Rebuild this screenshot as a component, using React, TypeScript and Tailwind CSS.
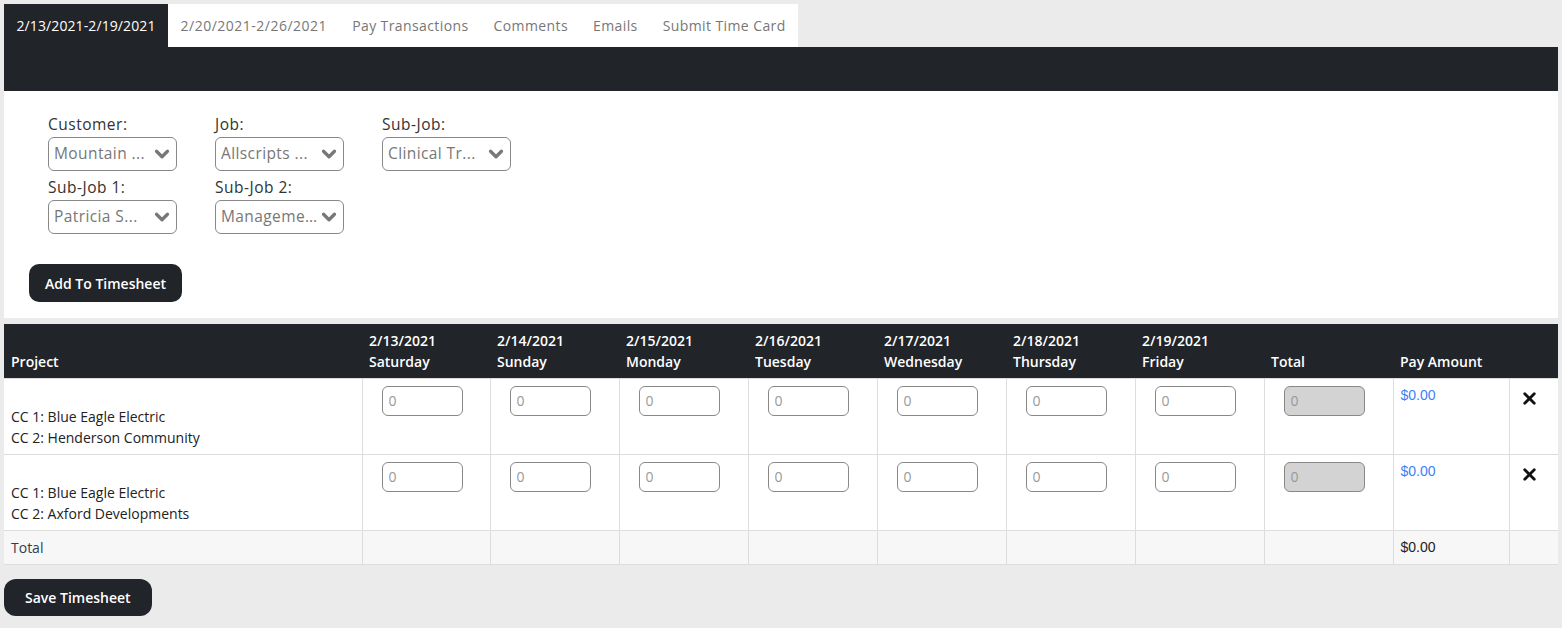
import { ChevronDown, X } from 'lucide-react';

const tabs = [
  { label: '2/13/2021-2/19/2021', track: 'tracking-[0.1px]' },
  { label: '2/20/2021-2/26/2021', track: 'tracking-[0.5px]' },
  { label: 'Pay Transactions', track: 'tracking-[0.4px]' },
  { label: 'Comments', track: 'tracking-[0.4px]' },
  { label: 'Emails', track: 'tracking-[0.4px]' },
  { label: 'Submit Time Card', track: 'tracking-[0.4px]' },
];

const days = [
  { date: '2/13/2021', name: 'Saturday' },
  { date: '2/14/2021', name: 'Sunday' },
  { date: '2/15/2021', name: 'Monday' },
  { date: '2/16/2021', name: 'Tuesday' },
  { date: '2/17/2021', name: 'Wednesday' },
  { date: '2/18/2021', name: 'Thursday' },
  { date: '2/19/2021', name: 'Friday' },
];

const rows = [
  { cc1: 'Blue Eagle Electric', cc2: 'Henderson Community' },
  { cc1: 'Blue Eagle Electric', cc2: 'Axford Developments' },
];

const font = { fontFamily: '"Open Sans", "Liberation Sans", sans-serif' };
const arial = { fontFamily: '"Liberation Sans", Arial, sans-serif' };

function Select({ label, value }: { label: string; value: string }) {
  return (
    <div className="w-[129px]">
      <div className="text-[15.5px] leading-[22px] tracking-[0.5px] text-[#333]">{label}</div>
      <div className="mt-[2px] flex h-[34px] items-center justify-between rounded-[6px] border border-[#888] bg-white pl-[5px] pr-[3px]">
        <span className="truncate text-[15.5px] tracking-[0.4px] text-[#777]">{value}</span>
        <ChevronDown size={22} strokeWidth={3.5} className="shrink-0 text-[#777]" />
      </div>
    </div>
  );
}

function HourInput({ disabled }: { disabled?: boolean }) {
  return (
    <input
      readOnly
      placeholder="0"
      className={
        'ml-[11px] mt-[7px] block h-[30px] w-[81px] rounded-[6px] border border-[#888] px-[6px] text-[14px] placeholder:text-[#999] ' +
        (disabled ? 'bg-[#d3d3d3]' : 'bg-white')
      }
    />
  );
}

export default function App() {
  return (
    <div className="min-h-screen bg-[#ebebeb] p-1 text-[14px]" style={font}>
      <div className="flex h-[43px]">
        {tabs.map((t, i) => (
          <div
            key={t.label}
            className={
              'flex items-center px-[12.5px] text-[14px] ' +
              t.track +
              (i === 0 ? ' bg-[#212429] text-white' : ' bg-white text-[#777]')
            }
          >
            {t.label}
          </div>
        ))}
      </div>
      <div className="h-[44px] bg-[#212429]" />

      <div className="h-[227px] bg-white pl-[25px] pt-[22px]">
        <div className="flex flex-col gap-[5px] pl-[19px]">
          <div className="flex gap-[38px]">
            <Select label="Customer:" value="Mountain ..." />
            <Select label="Job:" value="Allscripts ..." />
            <Select label="Sub-Job:" value="Clinical Tr..." />
          </div>
          <div className="flex gap-[38px]">
            <Select label="Sub-Job 1:" value="Patricia S..." />
            <Select label="Sub-Job 2:" value="Manageme..." />
          </div>
        </div>
        <button className="mt-[30px] h-[38px] rounded-[10px] bg-[#212429] px-[16px] text-[14px] font-semibold text-white">
          Add To Timesheet
        </button>
      </div>

      <table className="mt-[6px] w-[1554px] table-fixed border-collapse bg-white">
        <colgroup>
          <col className="w-[358px]" />
          <col className="w-[128px]" />
          {days.slice(1).map((d) => (
            <col key={d.date} className="w-[129px]" />
          ))}
          <col className="w-[129px]" />
          <col className="w-[116px]" />
          <col className="w-[49px]" />
        </colgroup>
        <thead>
          <tr className="h-[54px] bg-[#212429] text-left align-bottom text-white">
            <th className="px-[7px] pb-[6px] font-semibold leading-[21px]">Project</th>
            {days.map((d) => (
              <th key={d.date} className="px-[7px] pb-[6px] font-semibold leading-[21px]">
                {d.date}
                <br />
                {d.name}
              </th>
            ))}
            <th className="px-[7px] pb-[6px] font-semibold leading-[21px]">Total</th>
            <th className="px-[7px] pb-[6px] font-semibold leading-[21px]">Pay Amount</th>
            <th />
          </tr>
        </thead>
        <tbody>
          {rows.map((r, i) => (
            <tr key={i} className="h-[76px] align-top">
              <td className="border border-l-0 border-[#ddd] px-[7px] pt-[27px] leading-[21px] text-[#222]">
                CC 1: {r.cc1}
                <br />
                CC 2: {r.cc2}
              </td>
              {days.map((d) => (
                <td key={d.date} className="border border-[#ddd] px-[8px]">
                  <HourInput />
                </td>
              ))}
              <td className="border border-[#ddd] px-[8px]">
                <HourInput disabled />
              </td>
              <td className="border border-[#ddd] px-[7px] pt-[6px] text-[14px] text-[#3b82f6]" style={arial}>
                $0.00
              </td>
              <td className="border border-r-0 border-[#ddd] pl-[10px] pt-[10px]">
                <X size={19} strokeWidth={3.5} className="text-[#111]" />
              </td>
            </tr>
          ))}
          <tr className="h-[34px] bg-[#f7f7f7]">
            <td className="border border-l-0 border-[#ddd] px-[7px] text-[#2c3e50]">Total</td>
            {days.map((d) => (
              <td key={d.date} className="border border-[#ddd]" />
            ))}
            <td className="border border-[#ddd]" />
            <td className="border border-[#ddd] px-[7px] text-[#222]" style={arial}>
              $0.00
            </td>
            <td className="border border-r-0 border-[#ddd]" />
          </tr>
        </tbody>
      </table>

      <button className="mt-[14px] h-[37px] rounded-[12px] bg-[#212429] px-[21px] text-[14px] font-semibold text-white">
        Save Timesheet
      </button>
    </div>
  );
}
